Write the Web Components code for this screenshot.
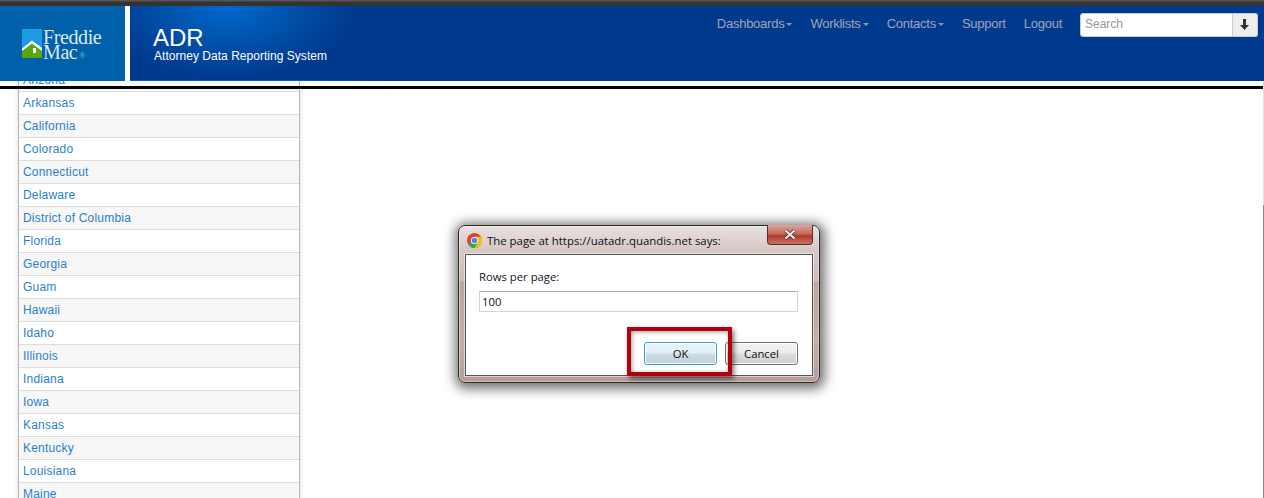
<!DOCTYPE html>
<html>
<head>
<meta charset="utf-8">
<title>ADR</title>
<style>
  html, body { margin: 0; height: 100%; overflow: hidden; background: #fff; }
  body { font-family: "Liberation Sans", Arial, sans-serif; }
</style>
</head>
<body>
<adr-page>
  <adr-header slot="header">
    <nav-link caret>Dashboards</nav-link>
    <nav-link caret>Worklists</nav-link>
    <nav-link caret>Contacts</nav-link>
    <nav-link>Support</nav-link>
    <nav-link>Logout</nav-link>
  </adr-header>
  <state-list slot="side">
    <state-row>Arizona</state-row>
    <state-row>Arkansas</state-row>
    <state-row>California</state-row>
    <state-row>Colorado</state-row>
    <state-row>Connecticut</state-row>
    <state-row>Delaware</state-row>
    <state-row>District of Columbia</state-row>
    <state-row>Florida</state-row>
    <state-row>Georgia</state-row>
    <state-row>Guam</state-row>
    <state-row>Hawaii</state-row>
    <state-row>Idaho</state-row>
    <state-row>Illinois</state-row>
    <state-row>Indiana</state-row>
    <state-row>Iowa</state-row>
    <state-row>Kansas</state-row>
    <state-row>Kentucky</state-row>
    <state-row>Louisiana</state-row>
    <state-row>Maine</state-row>
  </state-list>
  <prompt-dialog slot="dialog" title-text="The page at https://uatadr.quandis.net says:" label="Rows per page:" value="100"></prompt-dialog>
</adr-page>

<script>
// page shell: dark strip, header, then the scrolled content under the black rule
class AdrPage extends HTMLElement {
  constructor () {
    super()
    this.attachShadow({ mode: 'open' }).innerHTML = `
      <style>
        :host { display: flex; flex-direction: column; height: 498px; }
        .strip { height: 6px; flex: none; background: linear-gradient(#555 0, #555 1px, #333 2px, #333 100%); }
        .main { flex: 1; position: relative; overflow: hidden; background: #fff; }
        .rule { position: absolute; left: 0; right: 1px; top: 5px; height: 3px; background: #000; z-index: 2; }
        .edge { position: absolute; right: 0; top: 0; bottom: 0; width: 1px;
                background: linear-gradient(#e8e8e8 0, #e8e8e8 124px, #8a8a8a 124px, #8a8a8a 100%); z-index: 2; }
      </style>
      <div class="strip"></div>
      <slot name="header"></slot>
      <div class="main">
        <slot name="side"></slot>
        <div class="rule"></div>
        <div class="edge"></div>
        <slot name="dialog"></slot>
      </div>`
  }
}

class AdrHeader extends HTMLElement {
  constructor () {
    super()
    this.attachShadow({ mode: 'open' }).innerHTML = `
      <style>
        :host { display: flex; height: 75px; flex: none; background: #fff; }
        .logo { width: 125px; flex: none; margin-right: 5px; background: #0060a9; display: flex; align-items: flex-start; padding: 23px 0 0 22px; box-sizing: border-box; }
        .logo svg { flex: none; }
        .word { font-family: "Liberation Serif", serif; color: #dbe8f3; font-size: 20px; line-height: 15px; margin-left: 1px; letter-spacing: -.4px; position: relative; top: 1px; }
        .word sup { font-size: 8px; line-height: 0; vertical-align: 1px; margin-left: 2px; color: #8fb8da; letter-spacing: 0; }
        .bar { flex: 1; display: flex; justify-content: space-between; padding-right: 6px;
               background: linear-gradient(90deg, #0a5cc0, #0a5cc0 170px, #003a8f 260px) no-repeat left bottom / 100% 1px,
                           radial-gradient(ellipse 125px 72px at 97px 0, #0068cf 0, #0052ab 50%, #003a8f 100%) no-repeat #00378d; }
        .brand { padding: 20px 0 0 23px; color: #fff; }
        .brand h1 { margin: 0; font-size: 24px; line-height: 23px; font-weight: 400; }
        .brand p { margin: 0 0 0 1px; font-size: 12px; line-height: 14px; letter-spacing: .03px; }
        .right { display: flex; align-items: flex-start; padding-top: 7px; }
        .nav { display: flex; gap: 18px; padding-top: 1px; margin-right: 18px; }
        .search { display: flex; height: 24px; width: 178px; }
        .search span { flex: 1; box-sizing: border-box; background: #fff; border: 1px solid #ccc; border-radius: 3px 0 0 3px; color: #999; font-size: 12px; line-height: 20px; padding-left: 4px; }
        .search b { width: 25px; flex: none; box-sizing: border-box; background: #eee; border: 1px solid #ccc; border-left: 0; border-radius: 0 3px 3px 0; display: flex; padding: 5px 0 0 7px; }
        .search svg { display: block; }
      </style>
      <div class="logo">
        <svg width="20" height="29" viewBox="0 0 20 29">
          <rect width="20" height="29" fill="#1b9be0"/>
          <path d="M0 22 10 14.500 20 22V29H0Z" fill="#5aa808"/>
          <path d="M0 19.500 10 11.500 20 19V22L10 14.500 0 22Z" fill="#fff"/>
          <rect x="11" y="19" width="3" height="5" fill="#fff"/>
        </svg>
        <div class="word">Freddie<br>Mac<sup>®</sup></div>
      </div>
      <div class="bar">
        <div class="brand">
          <h1>ADR</h1>
          <p>Attorney Data Reporting System</p>
        </div>
        <div class="right">
          <div class="nav"><slot></slot></div>
          <div class="search">
            <span>Search</span>
            <b><svg width="9" height="11" viewBox="0 0 9 11"><path d="M3 0H6V6H9L4.500 11 0 6H3Z" fill="#333"/></svg></b>
          </div>
        </div>
      </div>`
  }
}

class NavLink extends HTMLElement {
  constructor () {
    super()
    this.attachShadow({ mode: 'open' }).innerHTML = `
      <style>
        :host { display: flex; align-items: center; color: #a0a5b5; font-size: 13px; line-height: 20px; white-space: nowrap; letter-spacing: -.25px; }
        i { display: none; width: 0; height: 0; margin: 1px 0 0 2px; border: 3px solid transparent; border-top-color: #8d96ad; border-bottom: 0; }
        :host([caret]) i { display: block; }
      </style>
      <slot></slot><i></i>`
  }
}

class StateList extends HTMLElement {
  constructor () {
    super()
    this.attachShadow({ mode: 'open' }).innerHTML = `
      <style>
        :host { display: block; width: 282px; box-sizing: border-box; margin: -12px 0 0 18px;
                border: solid #b5b5b5; border-width: 0 1px; box-shadow: 0 0 6px rgba(0,0,0,.12); }
        ::slotted(state-row:nth-child(even)) { background: #fff; }
        ::slotted(state-row:nth-child(odd)) { background: #f7f7f7; }
      </style>
      <slot></slot>`
  }
}

class StateRow extends HTMLElement {
  constructor () {
    super()
    this.attachShadow({ mode: 'open' }).innerHTML = `
      <style>
        :host { display: block; height: 23px; box-sizing: border-box; border-bottom: 1px solid #ddd;
                padding-left: 4px; color: #2a7fd0; font-size: 12px; line-height: 23px; letter-spacing: .2px; }
      </style>
      <slot></slot>`
  }
}

// the browser's prompt() box, Windows 7 Aero frame
class PromptDialog extends HTMLElement {
  constructor () {
    super()
    this.attachShadow({ mode: 'open' }).innerHTML = `
      <style>
        :host { position: absolute; left: 458px; top: 144px; width: 362px; height: 158px; box-sizing: border-box;
                z-index: 3; display: flex; flex-direction: column; padding: 0 6px 6px 6px;
                font-family: "Open Sans", "Noto Sans", sans-serif; font-size: 11.300px; color: #111;
                border: 1px solid #2b2b2b; border-radius: 7px;
                background: linear-gradient(#e9e2e0 0, #d6c8c4 24px, #cdbdb8 55px, #bba59f 56px, #c4aea8 75%, #b59e98 100%);
                box-shadow: 0 0 0 1px rgba(255,255,255,.35) inset, 1px 2px 12px 4px rgba(0,0,0,.55); }
        .title { height: 28px; flex: none; display: flex; align-items: center; gap: 5px; padding-left: 2px; position: relative; }
        .title svg { flex: none; }
        .title span { color: #0d0d20; font-size: 11.400px; }
        .close { position: absolute; right: 0; top: -1px; width: 46px; height: 20px; box-sizing: border-box;
                 border: 1px solid #5d2a25; border-top: 0; border-radius: 0 0 4px 4px;
                 background: linear-gradient(#dba79d 0, #c9685b 45%, #ae3a2c 58%, #c97464 100%);
                 display: flex; align-items: center; justify-content: center; }
        .body { flex: 1; background: #fff; border: 1px solid #555; display: flex; flex-direction: column; padding: 14px 14px 0 13px; position: relative; box-shadow: 0 0 0 1px rgba(255,255,255,.5); }
        .label { line-height: 15px; color: #1a0f1f; }
        .input { height: 21px; margin-top: 7px; box-sizing: border-box; border: 1px solid #d0d5dc; border-top-color: #aaa; line-height: 19px; padding-left: 2px; }
        .buttons { display: flex; justify-content: flex-end; gap: 8px; margin-top: 30px; }
        .btn { width: 73px; height: 23px; box-sizing: border-box; border: 1px solid #707070; border-radius: 3px; text-align: center; line-height: 21px;
               background: linear-gradient(#f4f4f4 0, #ebebeb 48%, #dcdcdc 52%, #cfcfcf 100%); box-shadow: 0 0 0 1px #fff inset; }
        .btn.main { border-color: #3c9fd0; background: linear-gradient(#eaf4f9 0, #e2eef4 48%, #cfdde5 52%, #c0d0da 100%); }
        .mark { position: absolute; left: 161px; top: 72px; width: 105px; height: 49px; box-sizing: border-box;
                border: 4px solid #b3000c; box-shadow: 2px 3px 5px rgba(0,0,0,.55), inset 1px 1px 4px rgba(0,0,0,.4); }
      </style>
      <div class="title">
        <svg width="15" height="15" viewBox="0 0 16 16">
          <circle cx="8" cy="8" r="8" fill="#db4437"/>
          <path d="M8 8 1.100 12A8 8 0 0 0 8 16 8 8 0 0 0 14.900 12Z" fill="#3aa655"/>
          <path d="M8 4H15A8 8 0 0 1 8 16L11.500 10Z" fill="#f4c20d"/>
          <circle cx="8" cy="8" r="3.800" fill="#fff"/>
          <circle cx="8" cy="8" r="2.900" fill="#4285f4"/>
        </svg>
        <span id="t"></span>
        <div class="close"><svg width="14" height="11" viewBox="0 0 14 11"><path d="M2.500 1.500 11.500 9.500M11.500 1.500 2.500 9.500" stroke="#4a2a28" stroke-width="3.600" fill="none"/><path d="M2.500 1.500 11.500 9.500M11.500 1.500 2.500 9.500" stroke="#eee" stroke-width="2.200" fill="none"/></svg></div>
      </div>
      <div class="body">
        <div class="label" id="l"></div>
        <div class="input" id="v"></div>
        <div class="buttons">
          <div class="btn main">OK</div>
          <div class="btn">Cancel</div>
        </div>
        <div class="mark"></div>
      </div>`
  }

  connectedCallback () {
    this.shadowRoot.getElementById('t').textContent = this.getAttribute('title-text')
    this.shadowRoot.getElementById('l').textContent = this.getAttribute('label')
    this.shadowRoot.getElementById('v').textContent = this.getAttribute('value')
  }
}

customElements.define('adr-page', AdrPage)
customElements.define('adr-header', AdrHeader)
customElements.define('nav-link', NavLink)
customElements.define('state-list', StateList)
customElements.define('state-row', StateRow)
customElements.define('prompt-dialog', PromptDialog)
</script>
</body>
</html>
